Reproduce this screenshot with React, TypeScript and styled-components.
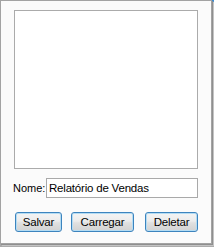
import React from "react";
import styled, { createGlobalStyle } from "styled-components";

const Global = createGlobalStyle`
  html, body { margin: 0; padding: 0; }
  body {
    width: 214px;
    height: 247px;
    overflow: hidden;
    background: #b5b5b5;
    font-family: "Liberation Sans", Arial, sans-serif;
  }
`;

const Desktop = styled.div`
  width: 214px;
  height: 247px;
  background: linear-gradient(to bottom, #3a8ad0 0px, #3a8ad0 4px, #a8a8a8 4px);
`;

const Window = styled.div`
  box-sizing: border-box;
  width: 212px;
  height: 244px;
  border: 1px solid #a3a3a3;
  background: #fbfbfb;
  padding: 9px 13px 0 13px;
  display: flex;
  flex-direction: column;
  box-shadow: 1px 1px 0 #8f8f8f, 2px 2px 1px #c4c4c4;
`;

const ListBox = styled.div`
  box-sizing: border-box;
  width: 184px;
  height: 159px;
  border: 1px solid #ababab;
  background: #ffffff;
`;

const FieldRow = styled.div`
  display: flex;
  align-items: center;
  justify-content: space-between;
  width: 185px;
  margin-left: -1px;
  margin-top: 9px;
  height: 20px;
`;

const Label = styled.label`
  font-size: 11px;
  color: #000;
  white-space: nowrap;
`;

const TextInput = styled.input`
  box-sizing: border-box;
  width: 152px;
  height: 20px;
  border: 1px solid #a9a9a9;
  background: #fff;
  padding: 0 2px;
  font-family: "Liberation Sans", Arial, sans-serif;
  font-size: 11.5px;
  letter-spacing: -0.2px;
  color: #000;
  outline: none;
`;

const ButtonRow = styled.div`
  display: flex;
  margin-top: 14px;
  padding-left: 1px;
`;

const Button = styled.button<{ $w: number; $ml: number }>`
  box-sizing: border-box;
  width: ${(p) => p.$w}px;
  height: 20px;
  margin-left: ${(p) => p.$ml}px;
  padding: 0;
  border: 1px solid #3d84be;
  border-radius: 3px;
  background: linear-gradient(to bottom, #f4f4f4 0%, #ececec 45%, #e0e0e0 55%, #d2d2d2 100%);
  box-shadow: inset 0 0 0 1px #b4dcf3;
  font-family: "Liberation Sans", Arial, sans-serif;
  font-size: 11.5px;
  letter-spacing: -0.2px;
  color: #000;
`;

export default function App() {
  return (
    <>
      <Global />
      <Desktop>
        <Window>
          <ListBox />
          <FieldRow>
            <Label>Nome:</Label>
            <TextInput defaultValue="Relatório de Vendas" />
          </FieldRow>
          <ButtonRow>
            <Button $w={47} $ml={0}>Salvar</Button>
            <Button $w={63} $ml={9}>Carregar</Button>
            <Button $w={53} $ml={11}>Deletar</Button>
          </ButtonRow>
        </Window>
      </Desktop>
    </>
  );
}
